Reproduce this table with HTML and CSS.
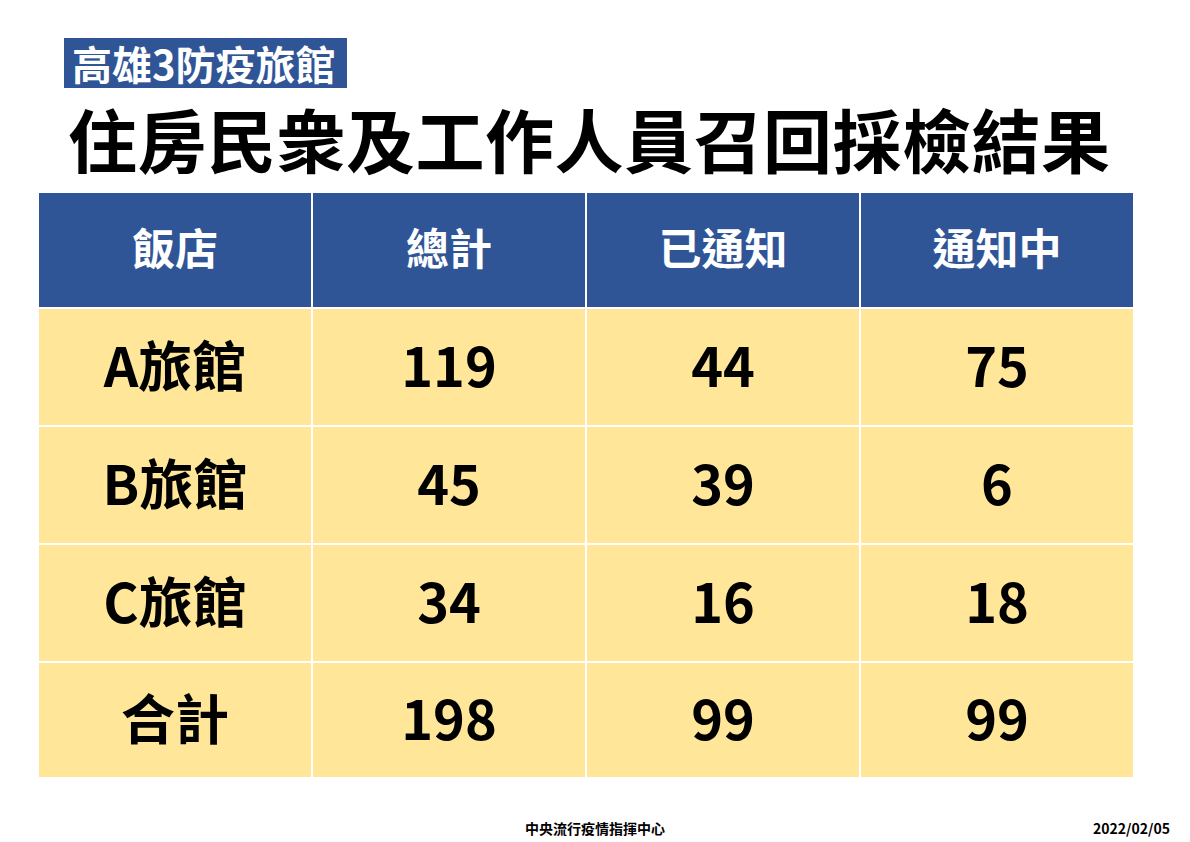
FILE: index.html
```html
<!DOCTYPE html>
<html lang="zh-Hant">
<head>
<meta charset="utf-8">
<link rel="stylesheet" href="styles.css">
</head>
<body>
<div class="page">
  <header class="head">
    <div class="badge">高雄3防疫旅館</div>
    <h1 class="title">住房民衆及工作人員召回採檢結果</h1>
  </header>
  <div class="grid">
    <div class="th">飯店</div>
    <div class="th">總計</div>
    <div class="th">已通知</div>
    <div class="th">通知中</div>

    <div class="td">A旅館</div>
    <div class="td">119</div>
    <div class="td">44</div>
    <div class="td">75</div>

    <div class="td">B旅館</div>
    <div class="td">45</div>
    <div class="td">39</div>
    <div class="td">6</div>

    <div class="td">C旅館</div>
    <div class="td">34</div>
    <div class="td">16</div>
    <div class="td">18</div>

    <div class="td">合計</div>
    <div class="td">198</div>
    <div class="td">99</div>
    <div class="td">99</div>
  </div>
  <footer class="foot">
    <span class="org">中央流行疫情指揮中心</span>
    <span class="date">2022/02/05</span>
  </footer>
</div>
</body>
</html>
```
FILE: styles.css
```css
html, body {
  margin: 0;
  padding: 0;
  background: #ffffff;
}
body {
  width: 1190px;
  height: 842px;
  overflow: hidden;
  font-family: "Noto Sans CJK TC", "Noto Sans", sans-serif;
  color: #000;
}
.page {
  display: flex;
  flex-direction: column;
  padding: 38px 57px 0 39px;
  height: 842px;
  box-sizing: border-box;
}
.head {
  display: flex;
  flex-direction: column;
  align-items: flex-start;
  padding-left: 25px;
}
.badge {
  background: #2f5597;
  color: #fff;
  font-weight: 700;
  font-size: 40px;
  line-height: 50px;
  height: 50px;
  padding: 0 11px 0 8px;
  letter-spacing: 0;
}
.title {
  margin: 4px 0 0 4px;
  font-size: 69px;
  line-height: 92px;
  font-weight: 700;
  letter-spacing: 0.5px;
  height: 92px;
}
.grid {
  margin-top: 9px;
  display: grid;
  grid-template-columns: repeat(4, 272px);
  grid-template-rows: 114px 116px 116px 116px 114px;
  gap: 2px;
  width: 1094px;
}
.th, .td {
  display: flex;
  align-items: center;
  justify-content: center;
  font-weight: 700;
  padding-bottom: 8px;
  box-sizing: border-box;
}
.th {
  background: #2f5597;
  color: #fff;
  font-size: 43px;
}
.td {
  background: #ffe699;
  color: #000;
  font-size: 54px;
}
.foot {
  margin-top: 41px;
  display: flex;
  justify-content: space-between;
  align-items: center;
  font-size: 14px;
  line-height: 20px;
  font-weight: 700;
  padding-left: 486px;
  margin-right: -37px;
}
```
